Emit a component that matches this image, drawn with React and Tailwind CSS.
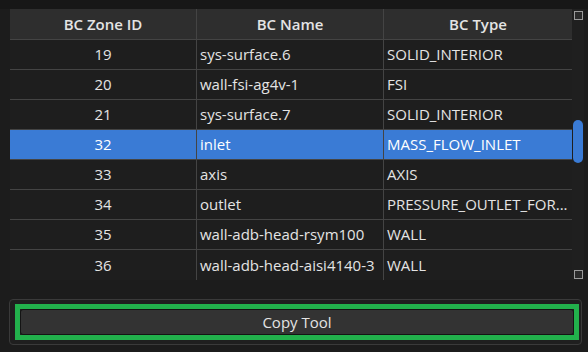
const rows = [
  { id: 19, name: "sys-surface.6", type: "SOLID_INTERIOR" },
  { id: 20, name: "wall-fsi-ag4v-1", type: "FSI" },
  { id: 21, name: "sys-surface.7", type: "SOLID_INTERIOR" },
  { id: 32, name: "inlet", type: "MASS_FLOW_INLET", selected: true },
  { id: 33, name: "axis", type: "AXIS" },
  { id: 34, name: "outlet", type: "PRESSURE_OUTLET_FOR..." },
  { id: 35, name: "wall-adb-head-rsym100", type: "WALL" },
  { id: 36, name: "wall-adb-head-aisi4140-3", type: "WALL" },
];

function Corner() {
  return <div className="h-[9px] w-[9px] border border-[#9a9a9a] bg-[#2a2a2a]" />;
}

export default function App() {
  return (
    <div
      className="flex h-[352px] w-[588px] flex-col bg-[#1c1c1c] text-[15px] text-[#e4e4e4]"
      style={{ fontFamily: '"Open Sans", "Noto Sans", sans-serif' }}
    >
      <div className="h-[9px] bg-[#171717]" />
      <div className="flex pl-[10px] pr-[4px]">
        <div className="w-[562px]">
          <div className="grid h-[31px] grid-cols-[187px_187px_188px] border-b border-[#444] bg-[#2e2e2e] font-semibold">
            <div className="flex items-center justify-center border-r border-[#444]">BC Zone ID</div>
            <div className="flex items-center justify-center border-r border-[#444]">BC Name</div>
            <div className="flex items-center justify-center">BC Type</div>
          </div>
          {rows.map((r, i) => (
            <div
              key={r.id}
              className={`grid h-[30px] grid-cols-[187px_187px_188px] ${
                i < rows.length - 1 ? "border-b border-[#444]" : ""
              } ${r.selected ? "bg-[#3a7bd5] text-white" : "bg-[#1e1e1e]"}`}
            >
              <div className="flex items-center justify-center border-r border-[#444]">{r.id}</div>
              <div className="flex items-center border-r border-[#444] pl-[3px]">{r.name}</div>
              <div className="flex items-center pl-[3px] whitespace-nowrap">{r.type}</div>
            </div>
          ))}
        </div>
        <div className="flex w-[12px] flex-col items-center justify-between bg-[#1f1f1f] pb-[1px] pt-[2px]">
          <Corner />
          <div className="flex flex-1 flex-col pt-[100px]">
            <div className="h-[43px] w-[10px] rounded-full bg-[#3a7bd5]" />
          </div>
          <Corner />
        </div>
      </div>
      <div className="ml-[9px] mr-[6px] mt-[19px] rounded-[4px] border border-[#3a3a3a] bg-[#1f1f1f] pb-[4px] pl-[5px] pr-[2px] pt-[4px]">
        <div className="border-[5px] border-[#22b14c]">
          <button
            type="button"
            className="flex h-[26px] w-full items-center justify-center rounded-[3px] border border-[#141414] bg-[#333333] text-[15px] text-[#e4e4e4]"
          >
            Copy Tool
          </button>
        </div>
      </div>
    </div>
  );
}
